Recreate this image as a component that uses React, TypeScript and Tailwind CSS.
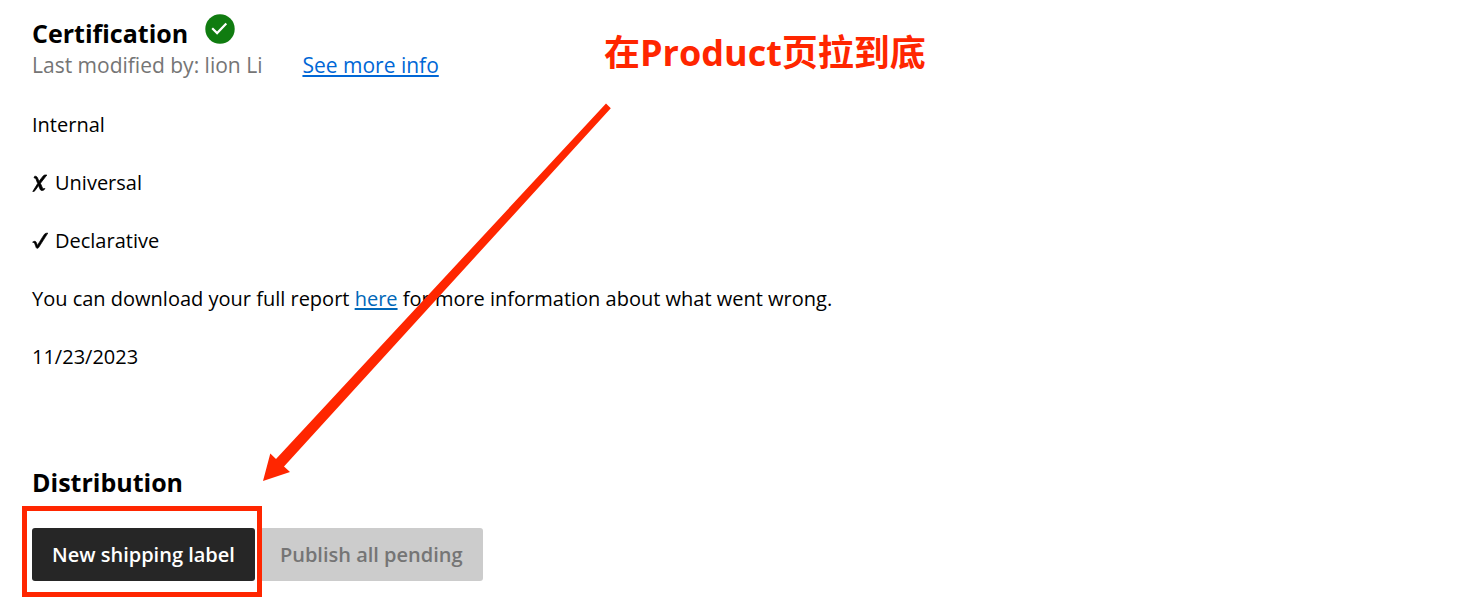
import type { ReactNode } from "react";

function CheckBadge() {
  return (
    <svg viewBox="0 0 30 30" className="size-[30px]" role="img" aria-label="Passed">
      <circle cx="15" cy="15" r="14.7" fill="#107c10" />
      <path d="M7.2 14.2l4.9 4.9 9.2-9.6" fill="none" stroke="#fff" strokeWidth="2.2" />
    </svg>
  );
}

function CrossMark() {
  return (
    <svg viewBox="0 0 16 18" className="h-[18px] w-4 shrink-0" aria-hidden="true">
      <path
        d="M2.8 2.2C4.6 2.2 5.2 3 5.8 4.6L7 7.4 11 2.2C11.7 1.2 12.6.9 14.8 1L8.4 9.3 10.2 13.4C10.7 14.6 11.3 14.9 12.9 14.6 12 16.2 11 16.6 9.8 16.5 8.6 16.4 8.2 15.6 7.7 14.3L6.6 11.5 3.8 15.4C3 16.8 2.4 17.3.8 17.5L5.7 9.5 4.2 5.6C3.7 4.3 3.3 3.8 2 4Z"
        fill="#000"
        stroke="#000"
        strokeWidth="0.8"
      />
    </svg>
  );
}

function TickMark() {
  return (
    <svg viewBox="0 0 16 18" className="h-[18px] w-4 shrink-0" aria-hidden="true">
      <path
        d="M.6 10.2C2.6 8.6 3.8 9.2 4.5 11L5.4 13.4 11.6 3.4C12.8 1.5 13.6 1.2 15.8 1.1L6.6 15.6C6 16.5 4.6 16.7 4.2 15.6L2.9 12C2.4 10.8 1.8 10.4.6 10.2Z"
        fill="#000"
        stroke="#000"
        strokeWidth="0.7"
      />
    </svg>
  );
}

function Check({ mark, children }: { mark: ReactNode; children: ReactNode }) {
  return (
    <li className="flex items-center gap-[7px]">
      {mark}
      {children}
    </li>
  );
}

export default function App() {
  return (
    <main className="relative min-h-screen bg-white px-8 pt-3.5 font-['Open_Sans','Noto_Sans_CJK_SC',sans-serif] text-black">
      <section>
        <div className="flex items-start gap-[17px]">
          <h2 className="pt-0.5 text-[25px] leading-[34px] font-bold">Certification</h2>
          <CheckBadge />
        </div>
        <div className="flex gap-10 text-[21px] leading-[30px]">
          <p className="text-[#757575]">Last modified by: lion Li</p>
          <a href="#info" className="text-[#0067d6] underline decoration-2 underline-offset-2">
            See more info
          </a>
        </div>
        <div className="mt-[30px] flex flex-col gap-7 text-[20px] leading-[30px]">
          <p>Internal</p>
          <ul className="flex flex-col gap-7">
            <Check mark={<CrossMark />}>Universal</Check>
            <Check mark={<TickMark />}>Declarative</Check>
          </ul>
          <p>
            You can download your full report{" "}
            <a href="#report" className="text-[#0067b8] underline decoration-2 underline-offset-2">
              here
            </a>{" "}
            for more information about what went wrong.
          </p>
          <p>11/23/2023</p>
        </div>
      </section>

      <section className="mt-[93px] pb-7">
        <h2 className="text-[25px] leading-[34px] font-bold">Distribution</h2>
        <div className="mt-[29px] flex gap-[5px]">
          <div className="relative">
            <button type="button" className="h-[53px] rounded-[3px] bg-[#262626] px-5 text-[20px] font-semibold text-white">
              New shipping label
            </button>
            <div className="pointer-events-none absolute -top-[22px] -right-[7px] -bottom-4 -left-2.5 z-10 border-[5px] border-[#ff2600]" />
          </div>
          <button type="button" disabled className="h-[53px] rounded-[3px] bg-[#ccc] px-5 text-[20px] font-semibold text-[#757575]">
            Publish all pending
          </button>
        </div>
      </section>

      <p className="absolute top-7 left-[604px] text-[36px] leading-[50px] font-bold whitespace-nowrap text-[#ff2600]">在Product页拉到底</p>
      <svg viewBox="0 0 350 380" className="pointer-events-none absolute top-[102px] left-[262px] h-[380px] w-[350px]" aria-hidden="true">
        <path d="M344 1.5L348.8 6.2 22 364.5 28 370 1 379 8.3 351.5 14 357Z" fill="#ff2600" />
      </svg>
    </main>
  );
}
